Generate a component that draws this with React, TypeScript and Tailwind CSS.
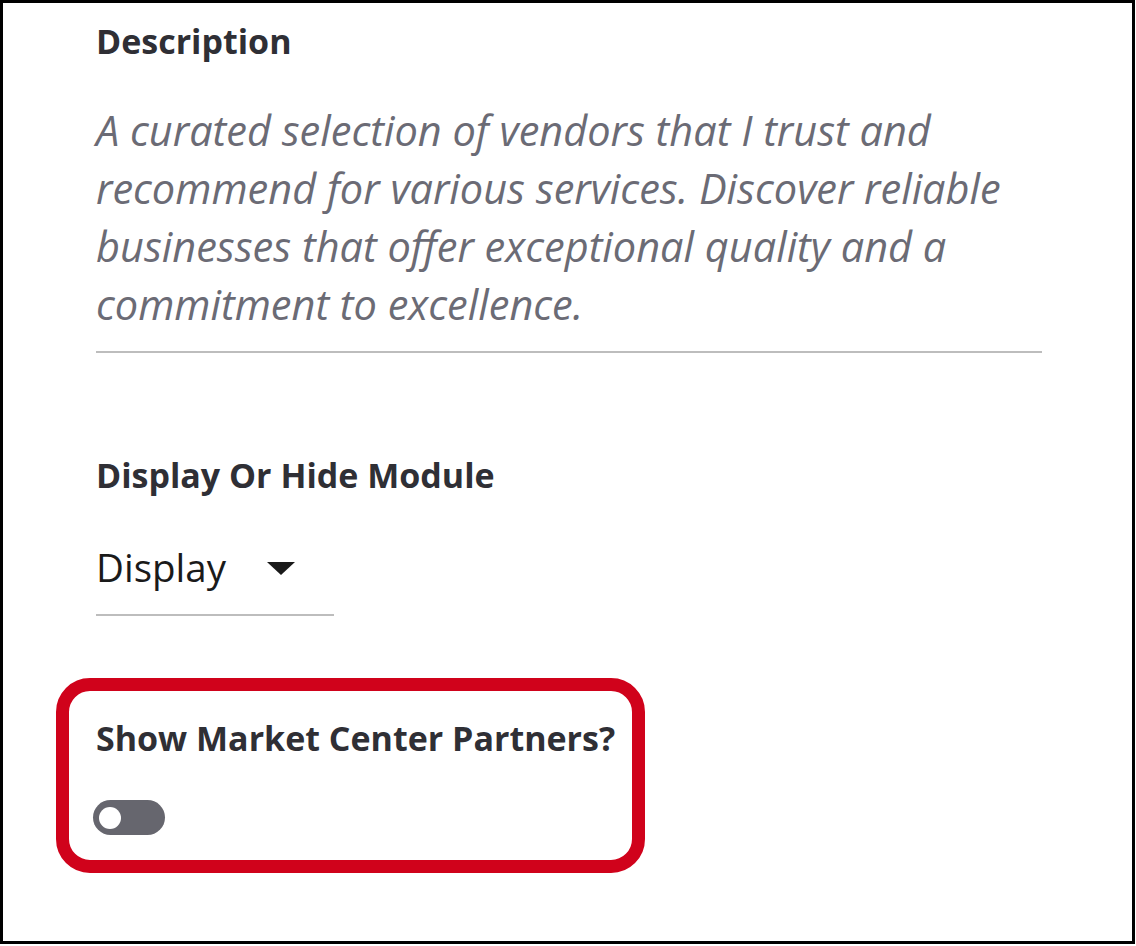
export default function App() {
  return (
    <div
      className="w-[1135px] h-[944px] border-[3px] border-black bg-white pl-[93px] pt-[15px] text-[#2f2f35]"
      style={{ fontFamily: '"Open Sans", sans-serif' }}
    >
      <div className="w-[946px]">
        <h2 className="text-[34px] leading-[46px] font-bold">Description</h2>
        <p className="mt-[37px] text-[41.5px] leading-[58px] italic text-[#6b6b75] pb-[18px] border-b-2 border-[#bdbdbd]">
          A curated selection of vendors that I trust and recommend for various services. Discover reliable businesses that offer exceptional quality and a commitment to excellence.
        </p>
      </div>

      <h2 className="mt-[99px] text-[34px] leading-[46px] font-bold">Display Or Hide Module</h2>
      <div className="mt-[45px] w-[238px] border-b-2 border-[#bdbdbd] pb-[23px] flex items-center">
        <span className="text-[38.5px] leading-[48px] text-[#1a1a1a]">Display</span>
        <svg className="ml-[41px] mt-[3px]" width="28" height="13" viewBox="0 0 28 13">
          <path d="M0 0 H28 L14 13 Z" fill="#1a1a1a" />
        </svg>
      </div>

      <div className="mt-[62px] -ml-[40px] w-[589px] h-[195px] border-[13px] border-[#d0021b] rounded-[34px] pl-[27px] pt-[24px]">
        <h2 className="text-[34px] leading-[46px] font-bold">Show Market Center Partners?</h2>
        <div className="mt-[39px] -ml-[3px] w-[72px] h-[35px] rounded-full bg-[#66666e] flex items-center pl-[6px]">
          <div className="w-[22px] h-[22px] rounded-full bg-white" />
        </div>
      </div>
    </div>
  );
}
